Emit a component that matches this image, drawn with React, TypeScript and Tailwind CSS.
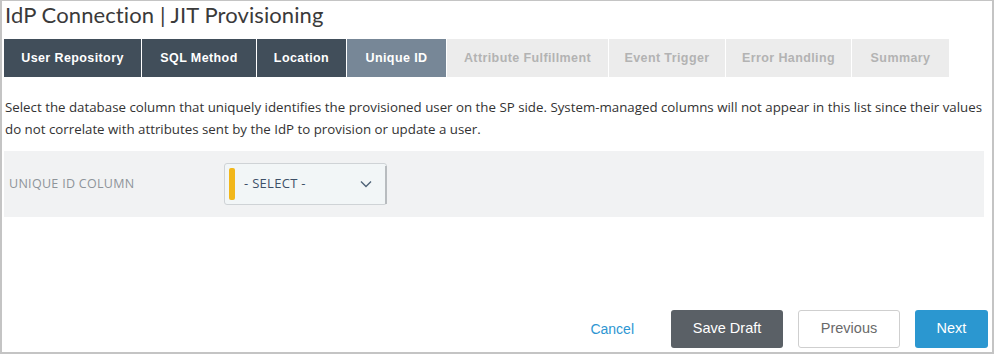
import React from "react";

const tabs: { label: string; w: string; state: "done" | "active" | "todo" }[] = [
  { label: "User Repository", w: "w-[137px]", state: "done" },
  { label: "SQL Method", w: "w-[114px]", state: "done" },
  { label: "Location", w: "w-[89px]", state: "done" },
  { label: "Unique ID", w: "w-[99px]", state: "active" },
  { label: "Attribute Fulfillment", w: "w-[161px]", state: "todo" },
  { label: "Event Trigger", w: "w-[116px]", state: "todo" },
  { label: "Error Handling", w: "w-[125px]", state: "todo" },
  { label: "Summary", w: "w-[97px]", state: "todo" },
];

export default function App() {
  return (
    <div className="w-[994px] h-[354px] bg-white border-t border-l-2 border-r-2 border-b-2 border-[#c4c4c4] flex flex-col overflow-hidden" style={{ fontFamily: '"Open Sans", sans-serif' }}>
      <h1 className="pl-[3px] h-[38px] text-[22px] leading-[28px] text-[#3a3a3a] font-normal tracking-[0.1px]" style={{ fontFamily: 'Lato, sans-serif' }}>
        IdP Connection | JIT Provisioning
      </h1>
      <div className="flex ml-[2px] h-[38px] gap-px">
        {tabs.map((t) => (
          <div
            key={t.label}
            className={
              t.w +
              " flex items-center justify-center text-[12.5px] font-bold tracking-[0.4px] " +
              (t.state === "done"
                ? "bg-[#414e5a] text-white"
                : t.state === "active"
                ? "bg-[#778797] text-white"
                : "bg-[#ececec] text-[#b3b3b3]")
            }
            style={{ fontFamily: '"Liberation Sans", Arial, sans-serif' }}
          >
            {t.label}
          </div>
        ))}
      </div>
      <p className="mt-[19px] pl-[3px] pr-[4px] text-[13.3px] leading-[22px] text-[#333]">
        Select the database column that uniquely identifies the provisioned user on the SP side. System-managed columns will not appear in this list since their values do not correlate with attributes sent by the IdP to provision or update a user.
      </p>
      <div className="mt-[11px] ml-[2px] w-[980px] h-[66px] bg-[#f1f2f3] flex items-center">
        <div className="w-[220px] pl-[5px] text-[12.5px] text-[#8e949a] tracking-[0.3px] pt-[1px]">UNIQUE ID COLUMN</div>
        <div className="relative w-[163px] h-[42px] rounded-[3px] border border-[#cfd3d6] bg-[#f2f6f7] flex items-center">
          <div className="absolute left-[4px] top-[4px] w-[6px] h-[32px] rounded-[2px] bg-[#f2b71b]" />
          <span className="ml-[19px] text-[13px] text-[#3d5068] tracking-[0.3px]">- SELECT -</span>
          <svg className="absolute right-[14px] top-[16px]" width="12" height="8" viewBox="0 0 12 8" fill="none">
            <path d="M1 1.5 L6 6.5 L11 1.5" stroke="#4f6378" strokeWidth="1.4" />
          </svg>
          <div className="absolute right-[-1px] top-[2px] w-[2px] h-[38px] bg-[#b8bcbf]" />
        </div>
      </div>
      <div className="flex-1" />
      <div className="flex justify-end items-center mr-[4px] mb-[4px] gap-[15px] h-[38px]" style={{ fontFamily: '"Liberation Sans", Arial, sans-serif' }}>
        <button className="h-[38px] px-[0px] mr-[22px] text-[14px] text-[#2d96d2]">Cancel</button>
        <button className="h-[38px] w-[112px] rounded-[3px] bg-[#5a6066] text-white text-[14.5px]">Save Draft</button>
        <button className="h-[38px] w-[102px] rounded-[3px] border border-[#cfcfcf] bg-white text-[#6a6a6a] text-[14.5px]">Previous</button>
        <button className="h-[38px] w-[73px] rounded-[3px] bg-[#2b97d0] text-white text-[14.5px]">Next</button>
      </div>
    </div>
  );
}
